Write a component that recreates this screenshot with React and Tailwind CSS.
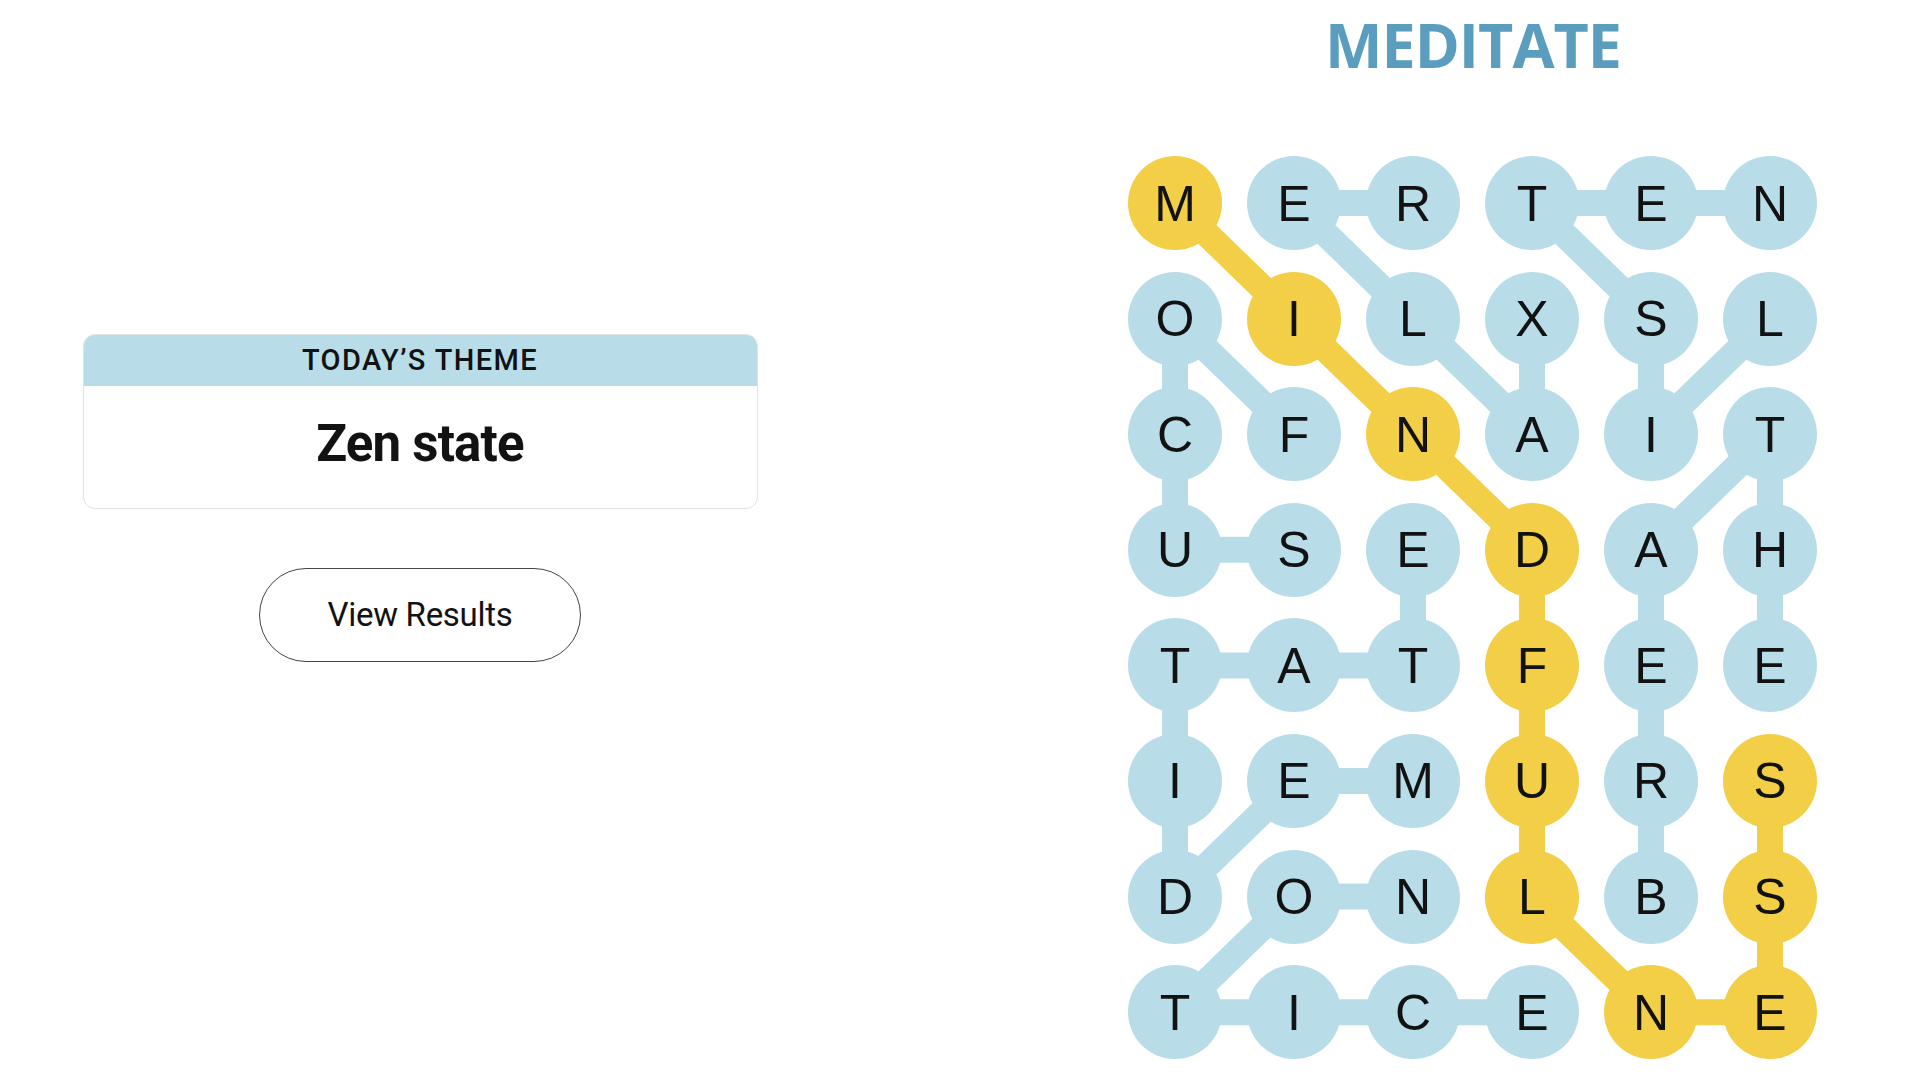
import React from "react";

const GRID = [
  "MERTEN",
  "OILXSL",
  "CFNAIT",
  "USEDAH",
  "TATFEE",
  "IEMURS",
  "DONLBS",
  "TICENE",
];

const YELLOW_PATH = [
  [0, 0], [1, 1], [2, 2], [3, 3], [4, 3], [5, 3], [6, 3], [7, 4], [7, 5], [6, 5], [5, 5],
];

const BLUE_PATHS = [
  [[0, 2], [0, 1], [1, 2], [2, 3], [1, 3]],
  [[1, 5], [2, 4], [1, 4], [0, 3], [0, 4], [0, 5]],
  [[6, 4], [5, 4], [4, 4], [3, 4], [2, 5], [3, 5], [4, 5]],
  [[2, 1], [1, 0], [2, 0], [3, 0], [3, 1]],
  [[5, 2], [5, 1], [6, 0], [5, 0], [4, 0], [4, 1], [4, 2], [3, 2]],
  [[6, 2], [6, 1], [7, 0], [7, 1], [7, 2], [7, 3]],
];

const BLUE = "#b8dde9";
const YELLOW = "#f2cf46";

const cx = (c) => 47 + 119 * c;
const cy = (r) => 47 + 115.6 * r;

const yellowSet = new Set(YELLOW_PATH.map(([r, c]) => `${r}-${c}`));

function Path({ pts, color }) {
  const d = pts.map(([r, c], i) => `${i === 0 ? "M" : "L"}${cx(c)} ${cy(r)}`).join(" ");
  return <path d={d} fill="none" stroke={color} strokeWidth="26" strokeLinejoin="round" strokeLinecap="round" />;
}

export default function App() {
  return (
    <div className="w-[1920px] h-[1080px] bg-white flex overflow-hidden">
      <div className="w-[840px] pt-[334px] flex flex-col items-center">
        <div className="w-[675px] rounded-[12px] border border-[#e2e2e2] overflow-hidden bg-white">
          <div
            className="h-[51px] bg-[#b8dde9] flex items-center justify-center text-[29px] font-medium tracking-[1.4px] text-[#121212]"
            style={{ fontFamily: "Roboto, 'Liberation Sans', sans-serif" }}
          >
            TODAY’S THEME
          </div>
          <div
            className="h-[122px] flex items-center justify-center pb-[6px] text-[51px] font-bold tracking-[-0.8px] text-[#121212]"
            style={{ fontFamily: "Roboto, 'Liberation Sans', sans-serif" }}
          >
            Zen state
          </div>
        </div>
        <button
          className="mt-[59px] w-[322px] h-[94px] rounded-full border border-[#444] bg-white flex items-center justify-center text-[33px] tracking-[-0.3px] text-[#121212]"
          style={{ fontFamily: "Roboto, 'Liberation Sans', sans-serif" }}
        >
          View Results
        </button>
      </div>
      <div className="flex-1 pl-[288px] flex flex-col">
        <div
          className="w-[690px] text-center text-[61px] leading-none font-bold tracking-[-1px] text-[#5a9dbf] pt-[14px]"
          style={{ fontFamily: "'Open Sans', sans-serif" }}
        >
          MEDITATE
        </div>
        <div className="relative mt-[81px] w-[689px]">
          <svg className="absolute inset-0" width="689" height="904" viewBox="0 0 689 904">
            {BLUE_PATHS.map((p, i) => (
              <Path key={i} pts={p} color={BLUE} />
            ))}
            <Path pts={YELLOW_PATH} color={YELLOW} />
          </svg>
          <div className="relative grid grid-cols-[repeat(6,94px)] gap-x-[25px] gap-y-[21.6px]">
            {GRID.flatMap((row, r) =>
              row.split("").map((ch, c) => (
                <div
                  key={`${r}-${c}`}
                  className={`w-[94px] h-[94px] rounded-full flex items-center justify-center pt-[2px] text-[50px] text-[#121212] ${
                    yellowSet.has(`${r}-${c}`) ? "bg-[#f2cf46]" : "bg-[#b8dde9]"
                  }`}
                  style={{ fontFamily: "'Liberation Sans', Arial, sans-serif" }}
                >
                  {ch}
                </div>
              ))
            )}
          </div>
        </div>
      </div>
    </div>
  );
}
